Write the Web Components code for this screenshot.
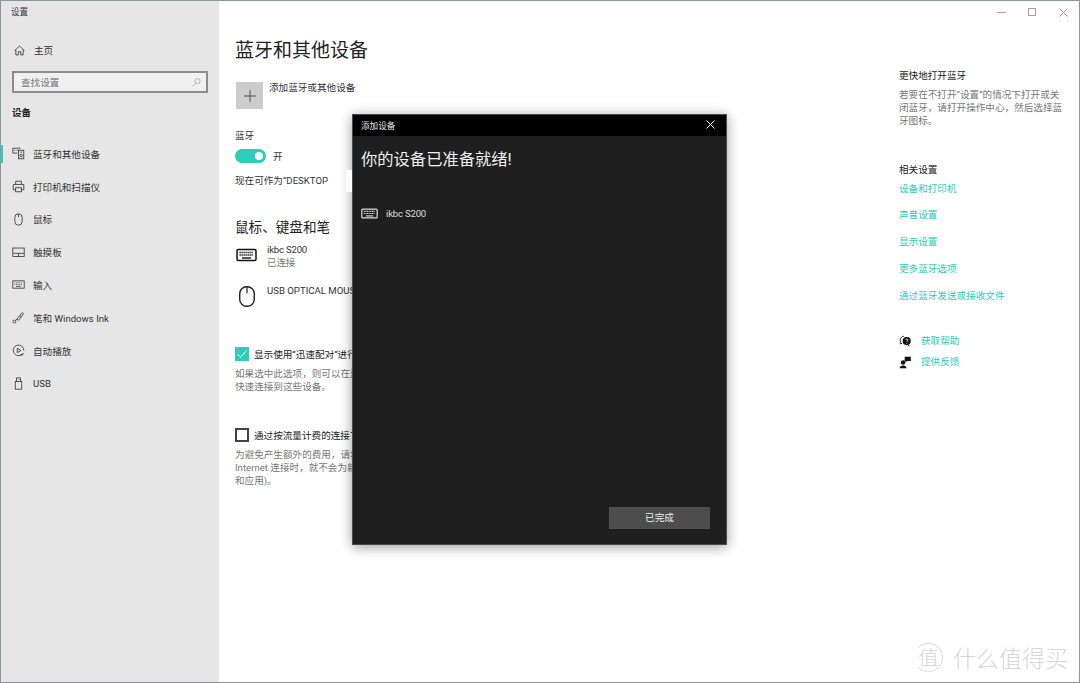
<!DOCTYPE html>
<html lang="zh-CN">
<head>
<meta charset="utf-8">
<title>设置</title>
<style>
  html, body { margin: 0; height: 100%; background: #fff; }
  body { font-family: Roboto, "Noto Sans CJK SC", sans-serif; font-size: 9.6px; color: #222; }
</style>
</head>
<body>
<settings-window>
  <side-nav slot="nav"></side-nav>
  <main-pane slot="main"></main-pane>
  <right-pane slot="aside"></right-pane>
  <add-dialog slot="overlay"></add-dialog>
  <site-mark slot="overlay"></site-mark>
</settings-window>

<script>
const KEYBOARD = `<rect x="1" y="2.5" width="19" height="11" rx="1.2" fill="none" stroke="currentColor" stroke-width="1.5"/>
  <path d="M3.5 5.5h14M3.5 8h14" stroke="currentColor" stroke-width="1.5" stroke-dasharray="1.3 .7" fill="none"/>
  <path d="M6 11h9" stroke="currentColor" stroke-width="1.4" fill="none"/>`;

const ICONS = {
  home: `<path d="M2 8 8 2.5 14 8M3.5 7v6.5h3v-4h3v4h3V7" fill="none" stroke="currentColor"/>`,
  search: `<circle cx="9.5" cy="6" r="3.7" fill="none" stroke="currentColor"/><path d="M7 9 2.5 13.5" stroke="currentColor" fill="none"/>`,
  devices: `<path d="M1 1.5h9.5M1 1.5v6h5.5" fill="none" stroke="currentColor"/><path d="M2.5 4h5" stroke="currentColor" stroke-dasharray="1 1" fill="none"/><rect x="8" y="4" width="6.5" height="10.5" fill="none" stroke="currentColor"/><circle cx="11.2" cy="10.5" r="1.6" fill="none" stroke="currentColor"/><path d="M10 6.3h2.5" stroke="currentColor" fill="none"/>`,
  printer: `<path d="M4.5 5V1.5h7V5M4.5 12H1.5V5.5h13V12h-3" fill="none" stroke="currentColor"/><rect x="4.5" y="9.5" width="7" height="5" fill="none" stroke="currentColor"/>`,
  mouse: `<rect x="3.5" y="1" width="9" height="14" rx="4.5" fill="none" stroke="currentColor"/><path d="M8 1v4" stroke="currentColor" fill="none"/>`,
  touchpad: `<rect x="1" y="2.5" width="14" height="10.5" fill="none" stroke="currentColor"/><path d="M1 9h14M8 9v4" stroke="currentColor" fill="none"/>`,
  input: `<rect x="1" y="3.5" width="14" height="9" fill="none" stroke="currentColor"/><path d="M3 6h10M3 8h10" stroke="currentColor" stroke-dasharray="1 1" fill="none"/><path d="M5 10.3h6" stroke="currentColor" fill="none"/>`,
  pen: `<path d="M6 10 12 2.5c1-.9 2.6.3 1.8 1.5L8 11.5zM6 10l-1.5 1.5M9.5 5.5l2 1.8" fill="none" stroke="currentColor"/><circle cx="3" cy="13" r="1.8" fill="none" stroke="currentColor"/>`,
  autoplay: `<path d="M12.5 12.5A6.5 6.5 0 1 1 14.5 8" fill="none" stroke="currentColor"/><path d="M6.5 5.2v5.4L11 8z" fill="none" stroke="currentColor"/><path d="M10 13.5h3.5V11" fill="none" stroke="currentColor"/>`,
  usb: `<rect x="4" y="5.5" width="8" height="9.5" fill="none" stroke="currentColor"/><path d="M5.5 5.5V1h5v4.5" fill="none" stroke="currentColor"/><path d="M7 3h.6M8.8 3h.6" stroke="currentColor" fill="none"/>`,
  help: `<path d="M6 1.5a4.6 4.6 0 0 0-3.8 7.2L1.5 11l2.4-.8" fill="none" stroke="currentColor"/><circle cx="9.5" cy="7.5" r="5" fill="currentColor"/><path d="M12 12l1.5 2-3-1z" fill="currentColor"/><path d="M8 6.2c.2-1.6 3-1.6 3 0 0 1.100-1.500 1.100-1.500 2.300M9.500 9.700v1" stroke="#fff" fill="none"/>`,
  feedback: `<circle cx="5" cy="8" r="2.700" fill="currentColor"/><path d="M.8 15c0-4.500 8.400-4.500 8.400 0z" fill="currentColor"/><path d="M7 1h7.500v5H10l-2 2V6H7z" fill="currentColor"/>`
};

const svg = (name, size) => `<svg viewBox="0 0 16 16" width="${size}" height="${size}" aria-hidden="true">${ICONS[name]}</svg>`;

class SettingsWindow extends HTMLElement {
  connectedCallback() {
    this.attachShadow({ mode: 'open' });
    this.shadowRoot.innerHTML = `
      <style>
        :host {
          display: grid;
          grid-template-columns: 218px 1fr 180px;
          position: relative;
          box-sizing: border-box;
          width: 1080px;
          height: 683px;
          overflow: hidden;
          background: #fff;
          border: 1px solid #8b9897;
        }
      </style>
      <slot name="nav"></slot>
      <slot name="main"></slot>
      <slot name="aside"></slot>
      <slot name="overlay"></slot>
    `;
  }
}

class SideNav extends HTMLElement {
  connectedCallback() {
    const items = [
      ['devices', '蓝牙和其他设备', true],
      ['printer', '打印机和扫描仪'],
      ['mouse', '鼠标'],
      ['touchpad', '触摸板'],
      ['input', '输入'],
      ['pen', '笔和 Windows Ink'],
      ['autoplay', '自动播放'],
      ['usb', 'USB']
    ];
    this.attachShadow({ mode: 'open' });
    this.shadowRoot.innerHTML = `
      <style>
        :host { display: block; background: #e6e6e6; color: #333; }
        .title { height: 22px; line-height: 22px; padding-left: 10px; font-size: 8.6px; }
        .row { display: flex; align-items: center; height: 32.8px; padding-left: 11px; position: relative; }
        .row svg { flex: none; margin-right: 8px; }
        .home { margin-top: 11px; height: 32px; padding-left: 12px; }
        .search {
          display: flex; align-items: center; justify-content: space-between;
          box-sizing: border-box; width: 196px; height: 22px; margin: 5px 0 0 11px; padding: 0 4px 0 7px;
          background: #f0f0f0; border: 2px solid #8c8c8c; color: #777;
        }
        .search svg { color: #999; }
        .group { height: 20px; line-height: 20px; margin-top: 10px; padding-left: 11px; font-weight: 700; color: #222; }
        .list { margin-top: 14.4px; }
        .on::before { content: ""; position: absolute; left: -1px; top: 7.5px; width: 3px; height: 18px; background: #2ccdb9; }
      </style>
      <div class="title">设置</div>
      <div class="row home">${svg('home', 13)}<span>主页</span></div>
      <div class="search"><span>查找设置</span>${svg('search', 11)}</div>
      <div class="group">设备</div>
      <div class="list">
        ${items.map(([icon, label, on]) => `<div class="row${on ? ' on' : ''}">${svg(icon, 13)}<span>${label}</span></div>`).join('')}
      </div>
    `;
  }
}

class MainPane extends HTMLElement {
  connectedCallback() {
    this.attachShadow({ mode: 'open' });
    this.shadowRoot.innerHTML = `
      <style>
        :host { display: block; padding: 35px 0 0 16px; color: #333; white-space: nowrap; overflow: hidden; }
        h1 { margin: 0; height: 29px; line-height: 30px; font-size: 19px; font-weight: 400; color: #222; }
        h2 { margin: 27px 0 0; height: 22px; line-height: 22px; font-size: 13.6px; font-weight: 400; color: #222; }
        .add { display: flex; gap: 6px; margin: 17px 0 0 1px; height: 27px; line-height: 12px; }
        .plus { width: 27px; height: 27px; background: #ccc; display: flex; align-items: center; justify-content: center; }
        .label { height: 16px; line-height: 16px; margin-top: 19px; }
        .toggle { display: flex; align-items: center; gap: 7px; margin-top: 5px; height: 14px; }
        .track { width: 31px; height: 14px; border-radius: 7px; background: #2ccdb9; position: relative; }
        .track::after { content: ""; position: absolute; right: 3px; top: 3px; width: 8px; height: 8px; border-radius: 50%; background: #fff; }
        .found { height: 16px; line-height: 16px; margin-top: 10px; }
        .device { display: flex; line-height: 13px; }
        .kb { margin-top: 5px; height: 27px; letter-spacing: -.2px; }
        .kb .ico { width: 32px; padding: 4px 0 0 1px; box-sizing: border-box; color: #111; }
        .sub { color: #777; line-height: 14px; }
        .ms { margin-top: 14px; height: 27px; }
        .ms .ico { width: 32px; padding: 2px 0 0 4px; box-sizing: border-box; color: #222; }
        .check { display: flex; align-items: center; gap: 5px; height: 14px; color: #222; }
        .box { box-sizing: border-box; width: 14px; height: 14px; }
        .box.yes { background: #2ccdb9; display: flex; align-items: center; justify-content: center; }
        .box.no { border: 2px solid #444; }
        .c1 { margin-top: 36px; }
        .c2 { margin-top: 35px; }
        .d1 { margin-top: 7px; line-height: 12.5px; color: #777; }
        .d2 { margin-top: 5.5px; line-height: 13px; color: #777; }
      </style>
      <h1>蓝牙和其他设备</h1>
      <div class="add">
        <div class="plus"><svg viewBox="0 0 12 12" width="12" height="12"><path d="M6 0v12M0 6h12" stroke="#555" fill="none"/></svg></div>
        <span>添加蓝牙或其他设备</span>
      </div>
      <div class="label">蓝牙</div>
      <div class="toggle"><div class="track"></div><span>开</span></div>
      <div class="found">现在可作为“DESKTOP</div>
      <h2>鼠标、键盘和笔</h2>
      <div class="device kb">
        <div class="ico"><svg viewBox="0 0 21 16" width="21" height="16">${KEYBOARD}</svg></div>
        <div>ikbc S200<div class="sub">已连接</div></div>
      </div>
      <div class="device ms">
        <div class="ico"><svg viewBox="0 0 16 21" width="16" height="21"><rect x=".7" y=".7" width="14.600" height="19.600" rx="7" fill="none" stroke="currentColor" stroke-width="1.400"/><path d="M8 .7v6.500" stroke="currentColor" stroke-width="1.200" fill="none"/></svg></div>
        <div>USB OPTICAL MOUS</div>
      </div>
      <div class="check c1">
        <div class="box yes"><svg viewBox="0 0 14 14" width="14" height="14"><path d="M2.500 7 5.500 10.500 11.500 3.500" stroke="#fff" fill="none"/></svg></div>
        <span>显示使用“迅速配对”进行</span>
      </div>
      <div class="d1">如果选中此选项，则可以在蓝<br>快速连接到这些设备。</div>
      <div class="check c2"><div class="box no"></div><span>通过按流量计费的连接下</span></div>
      <div class="d2">为避免产生额外的费用，请将<br>Internet 连接时，就不会为新<br>和应用)。</div>
    `;
  }
}

class RightPane extends HTMLElement {
  connectedCallback() {
    const links = ['设备和打印机', '声音设置', '显示设置', '更多蓝牙选项', '通过蓝牙发送或接收文件'];
    this.attachShadow({ mode: 'open' });
    this.shadowRoot.innerHTML = `
      <style>
        :host { display: block; color: #222; }
        .controls { display: flex; justify-content: flex-end; height: 22px; color: #a0a0a0; }
        .controls span { width: 31px; display: flex; align-items: center; justify-content: center; }
        .head { height: 16px; line-height: 16px; }
        .quick { margin-top: 45px; }
        .desc { margin-top: 3.5px; width: 165px; line-height: 13px; color: #777; }
        .related { margin-top: 35.5px; }
        .links { display: flex; flex-direction: column; gap: 10.75px; margin-top: 2.6px; }
        .links a, .help a { height: 16px; line-height: 16px; color: #2ccdb9; text-decoration: none; }
        .help { display: flex; flex-direction: column; gap: 5px; margin-top: 29.5px; }
        .help div { display: flex; align-items: center; gap: 9px; height: 16px; color: #111; }
      </style>
      <div class="controls">
        <span><svg width="9" height="9" viewBox="0 0 9 9"><path d="M0 4.500h9" stroke="currentColor" fill="none"/></svg></span>
        <span><svg width="9" height="9" viewBox="0 0 9 9"><rect x=".5" y=".5" width="7" height="7" stroke="currentColor" fill="none"/></svg></span>
        <span><svg width="9" height="9" viewBox="0 0 9 9"><path d="M.5.500l8 8M8.500.500l-8 8" stroke="currentColor" fill="none"/></svg></span>
      </div>
      <div class="head quick">更快地打开蓝牙</div>
      <div class="desc">若要在不打开“设置”的情况下打开或关闭蓝牙，请打开操作中心，然后选择蓝牙图标。</div>
      <div class="head related">相关设置</div>
      <div class="links">${links.map(l => `<a href="#">${l}</a>`).join('')}</div>
      <div class="help">
        <div>${svg('help', 13)}<a href="#">获取帮助</a></div>
        <div>${svg('feedback', 13)}<a href="#">提供反馈</a></div>
      </div>
    `;
  }
}

class AddDialog extends HTMLElement {
  connectedCallback() {
    this.attachShadow({ mode: 'open' });
    this.shadowRoot.innerHTML = `
      <style>
        :host {
          position: absolute; left: 351px; top: 113px;
          display: flex; flex-direction: column;
          box-sizing: border-box; width: 375px; height: 431px;
          background: #1f1f1f; color: #e6e6e6;
          border: 1px solid #4a4a4a;
          box-shadow: 0 2px 12px rgba(0,0,0,.4);
        }
        .bar { display: flex; justify-content: space-between; align-items: center; flex: none; box-sizing: border-box; height: 21px; padding: 0 11px 2px 8px; background: #000; font-size: 8.6px; }
        .bar svg { display: block; }
        h1 { margin: 13px 0 0 8px; height: 22px; line-height: 22px; font-size: 16.3px; font-weight: 400; color: #f0f0f0; }
        .dev { display: flex; align-items: center; gap: 8px; height: 16px; margin: 34px 0 0 8px; color: #ddd; letter-spacing: -.2px; }
        .foot { margin-top: auto; padding: 0 16px 15px 0; display: flex; justify-content: flex-end; }
        .done { width: 101px; height: 22px; line-height: 22px; text-align: center; background: #4d4d4d; color: #eee; }
        .patch { position: absolute; left: -7px; top: 55px; width: 6px; height: 22px; background: #fff; }
      </style>
      <div class="patch"></div>
      <div class="bar"><span>添加设备</span><svg width="9" height="9" viewBox="0 0 9 9"><path d="M.5.500l8 8M8.500.500l-8 8" stroke="#fff" fill="none"/></svg></div>
      <h1>你的设备已准备就绪!</h1>
      <div class="dev"><svg viewBox="0 0 21 16" width="17" height="13">${KEYBOARD}</svg><span>ikbc S200</span></div>
      <div class="foot"><div class="done">已完成</div></div>
    `;
  }
}

class SiteMark extends HTMLElement {
  connectedCallback() {
    this.attachShadow({ mode: 'open' });
    this.shadowRoot.innerHTML = `
      <style>
        :host {
          position: absolute; right: 11px; bottom: 10px;
          display: flex; align-items: center; gap: 10px;
          color: #d6d6d6; font-family: "Noto Sans CJK SC", sans-serif; font-weight: 300;
        }
        .seal {
          box-sizing: border-box; width: 29px; height: 29px; border-radius: 50%;
          border: 1px solid #dcdcdc; border-left-color: transparent;
          text-align: center; line-height: 26px; font-size: 20px;
        }
        .name { font-size: 23px; line-height: 30px; }
      </style>
      <div class="seal">值</div>
      <div class="name">什么值得买</div>
    `;
  }
}

customElements.define('settings-window', SettingsWindow);
customElements.define('side-nav', SideNav);
customElements.define('main-pane', MainPane);
customElements.define('right-pane', RightPane);
customElements.define('add-dialog', AddDialog);
customElements.define('site-mark', SiteMark);
</script>
</body>
</html>
